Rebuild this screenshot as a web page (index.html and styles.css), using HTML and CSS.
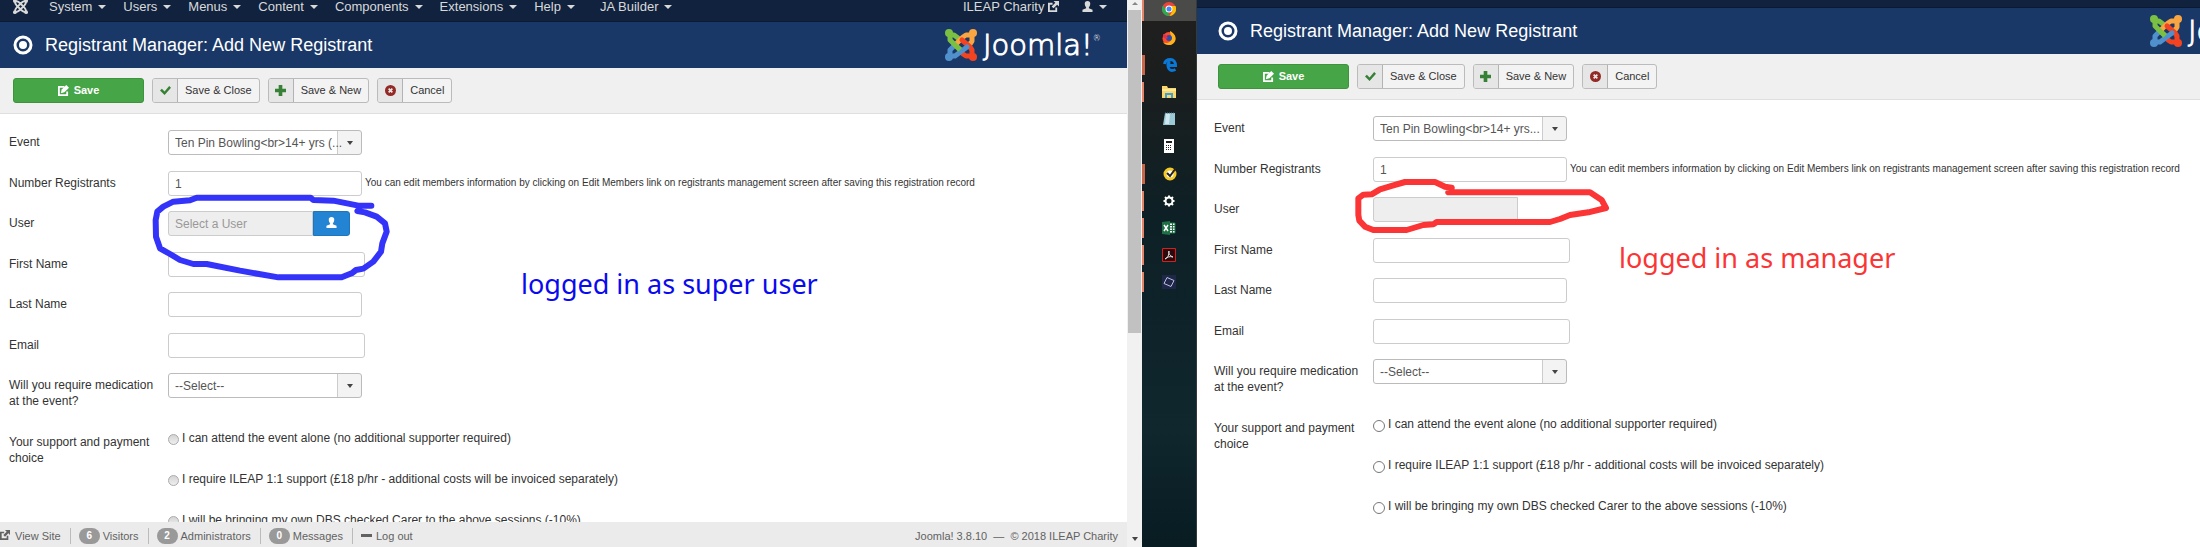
FILE: index.html
```
<!DOCTYPE html>
<html lang="en">
<head>
  <meta charset="UTF-8">
  <meta name="viewport" content="width=device-width, initial-scale=1.0">
  <title>Registrant Manager: Add New Registrant</title>
  <link rel="stylesheet" href="styles.css">
</head>
<body>
  <!-- shared icons -->
  <svg class="sprite" width="0" height="0" aria-hidden="true">
    <symbol id="joomla" viewBox="0 0 32 32">
      <g fill="none" stroke-width="5" stroke-linecap="round" stroke-linejoin="round">
        <path stroke="#7ac143" d="M5 6l4 0 4 3M5 6v5l3 3 9 8"/>
        <path stroke="#f9a541" d="M27 6v6l-2 3M27 6h-6l-3 2-7 7"/>
        <path stroke="#f44321" d="M27 27h-6l-3-2M27 27v-6l-2-3-8-7"/>
        <path stroke="#5091cd" d="M5 27v-6l3-3M5 27h5l4-3 8-6"/>
        <path stroke="#7ac143" d="M8 14l7 7" stroke-linecap="butt"/>
      </g>
      <circle cx="4" cy="4" r="4" fill="#7ac143"/>
      <circle cx="28" cy="4" r="4" fill="#f9a541"/>
      <circle cx="28" cy="28" r="4" fill="#f44321"/>
      <circle cx="4" cy="28" r="4" fill="#5091cd"/>
    </symbol>
    <symbol id="joomla-mono" viewBox="0 0 16 16">
      <g fill="none" stroke="currentColor" stroke-width="2">
        <path d="M2 2c3 0 4 1 5 2l5 5c1 1 2 3 2 5M14 2c-3 0-4 1-5 2L4 9c-1 1-2 3-2 5M2 2c0 3 1 4 2 5l5 5c1 1 3 2 5 2M14 2c0 3-1 4-2 5l-5 5c-1 1-3 2-5 2"/>
      </g>
      <g fill="currentColor">
        <circle cx="2" cy="2" r="2"/><circle cx="14" cy="2" r="2"/><circle cx="2" cy="14" r="2"/><circle cx="14" cy="14" r="2"/>
      </g>
    </symbol>
    <symbol id="target" viewBox="0 0 20 20">
      <circle cx="10" cy="10" r="8" fill="none" stroke="currentColor" stroke-width="3"/>
      <circle cx="10" cy="10" r="4" fill="currentColor"/>
    </symbol>
    <symbol id="edit" viewBox="0 0 12 12">
      <path fill="none" stroke="currentColor" stroke-width="2" d="M7 2H1v9h9V7"/>
      <path fill="currentColor" d="M3 9l1-4 5-5 3 3-5 5z"/>
    </symbol>
    <symbol id="external" viewBox="0 0 12 12">
      <path fill="none" stroke="currentColor" stroke-width="2" d="M5 3H1v8h8V7"/>
      <path fill="currentColor" d="M6 0h6v6l-2-2-4 4-2-2 4-4z"/>
    </symbol>
    <symbol id="check" viewBox="0 0 12 12">
      <path fill="currentColor" d="M0 6l2-2 3 3 5-6 2 2-7 8z"/>
    </symbol>
    <symbol id="plus" viewBox="0 0 12 12">
      <path fill="currentColor" d="M4 0h4v4h4v4H8v4H4V8H0V4h4z"/>
    </symbol>
    <symbol id="cancel" viewBox="0 0 12 12">
      <circle cx="6" cy="6" r="6" fill="currentColor"/>
      <path stroke="#e6e6e6" stroke-width="2" d="M4 4l4 4M8 4L4 8"/>
    </symbol>
    <symbol id="user" viewBox="0 0 12 12">
      <path fill="currentColor" d="M6 0c2 0 3 1 3 3S8 6 7.500 7v1l4 1.500V12H.5V9.500l4-1.500V7C4 6 3 5 3 3s1-3 3-3z"/>
    </symbol>
  </svg>

  <div class="desktop">
    <section class="window window-left">
      <div class="page">
        <nav class="navbar">
          <svg class="brand"><use href="#joomla-mono"/></svg>
          <a class="menu" href="#">System</a>
          <a class="menu" href="#">Users</a>
          <a class="menu" href="#">Menus</a>
          <a class="menu" href="#">Content</a>
          <a class="menu" href="#">Components</a>
          <a class="menu" href="#">Extensions</a>
          <a class="menu" href="#">Help</a>
          <a class="menu menu-extra" href="#">JA Builder</a>
          <a class="site" href="#">ILEAP Charity <svg class="icon"><use href="#external"/></svg></a>
          <a class="menu" href="#" aria-label="User menu"><svg class="icon"><use href="#user"/></svg></a>
        </nav>

        <header class="header">
          <svg class="title-icon"><use href="#target"/></svg>
          <h1>Registrant Manager: Add New Registrant</h1>
          <div class="logo">
            <svg class="logo-mark"><use href="#joomla"/></svg>
            <span class="logo-text">Joomla!<sup>®</sup></span>
          </div>
        </header>

        <div class="toolbar">
          <button class="btn btn-save" type="button"><svg class="icon"><use href="#edit"/></svg>Save</button>
          <button class="btn" type="button"><span class="btn-icon green"><svg class="icon"><use href="#check"/></svg></span><span class="btn-text">Save &amp; Close</span></button>
          <button class="btn" type="button"><span class="btn-icon green"><svg class="icon"><use href="#plus"/></svg></span><span class="btn-text">Save &amp; New</span></button>
          <button class="btn" type="button"><span class="btn-icon red"><svg class="icon"><use href="#cancel"/></svg></span><span class="btn-text">Cancel</span></button>
        </div>

        <form class="form">
          <div class="row">
            <label for="event1">Event</label>
            <span class="select"><select id="event1"><option>Ten Pin Bowling&lt;br&gt;14+ yrs (...</option></select></span>
          </div>
          <div class="row">
            <label for="number1">Number Registrants</label>
            <input class="text" id="number1" type="text" value="1">
            <small>You can edit members information by clicking on Edit Members link on registrants management screen after saving this registration record</small>
          </div>
          <div class="row">
            <label for="user1">User</label>
            <input class="text user" id="user1" type="text" placeholder="Select a User" readonly>
            <button class="btn-user" type="button" aria-label="Select a User"><svg class="icon"><use href="#user"/></svg></button>
          </div>
          <div class="row">
            <label for="first1">First Name</label>
            <input class="text wide" id="first1" type="text">
          </div>
          <div class="row">
            <label for="last1">Last Name</label>
            <input class="text" id="last1" type="text">
          </div>
          <div class="row">
            <label for="email1">Email</label>
            <input class="text wide" id="email1" type="text">
          </div>
          <div class="row">
            <label for="medication1">Will you require medication at the event?</label>
            <span class="select"><select id="medication1"><option>--Select--</option></select></span>
          </div>
          <div class="row" role="radiogroup" aria-labelledby="support1">
            <span class="label" id="support1">Your support and payment choice</span>
            <div class="radios">
              <label><input type="radio" name="support1">I can attend the event alone (no additional supporter required)</label>
              <label><input type="radio" name="support1">I require ILEAP 1:1 support (£18 p/hr - additional costs will be invoiced separately)</label>
              <label><input type="radio" name="support1">I will be bringing my own DBS checked Carer to the above sessions (-10%)</label>
            </div>
          </div>
        </form>

        <footer class="status">
          <a href="#"><svg class="icon"><use href="#external"/></svg>View Site</a>
          <span class="item"><span class="badge">6</span>Visitors</span>
          <span class="item"><span class="badge">2</span>Administrators</span>
          <span class="item"><span class="badge">0</span>Messages</span>
          <a class="item" href="#"><span class="dash"></span>Log out</a>
          <span class="version">Joomla! 3.8.10 &nbsp;—&nbsp; © 2018 ILEAP Charity</span>
        </footer>
      </div>
      <div class="scrollbar"><span class="arrow up"></span><span class="thumb"></span><span class="arrow down"></span></div>

      <svg class="pen pen-blue" viewBox="450 30 750 300">
        <path d="M1114 77H1075L1000 62L940 60L932 53H590L570 61L520 65L490 80L472 95L467 120L468 170L480 205L510 222L540 240L580 252H620L720 272L835 292H1025L1055 280L1068 270L1090 266L1120 245L1143 215L1147 190L1160 155L1155 130L1130 110L1095 97L1072 93"/>
      </svg>
      <p class="note note-blue">logged in as super user</p>
    </section>

    <aside class="taskbar">
      <ul>
        <li class="open current"><svg viewBox="0 0 14 14"><circle cx="7" cy="7" r="7" fill="#e8453c"/><path fill="#2da94f" d="M1 3.500l4.500 6L8 14A7 7 0 0 1 1 3.500z"/><path fill="#fdbd00" d="M7 4h6.500A7 7 0 0 1 7.500 14l3-5z"/><circle cx="7" cy="7" r="3.500" fill="#fff"/><circle cx="7" cy="7" r="2.500" fill="#4587f3"/></svg></li>
        <li><svg viewBox="0 0 14 14"><circle cx="7" cy="7.500" r="6.500" fill="#ff4b2b"/><path fill="#ffb31a" d="M8 0c4 2 6 5 5.500 8.500C13 12 10 14 7 14c-3 0-5-1-6-3 3 2 7 1 8-2 1-3-1-5-1-9z"/><circle cx="7" cy="7" r="3" fill="#2b4fa8"/><path fill="#e0304e" d="M1 3l3 1 2 3-2 1-3-2z"/></svg></li>
        <li class="open many"><svg viewBox="0 0 14 14"><path fill="none" stroke="#0a78d7" stroke-width="3" d="M1.500 6C2 3 4 1.500 7.500 1.500c3 0 5 2.500 5 6H5c0 3 2 5 4 5 1.500 0 2.500-.5 3.500-1M5 7c0-2 1-3 2.500-3"/></svg></li>
        <li class="open"><svg viewBox="0 0 14 14"><path fill="#fdd765" d="M0 1h5l1 2h8v10H0z"/><path fill="#ffe9a2" d="M0 4h14v2H0z"/><path fill="#3ba1dc" d="M3 8h8v5H9v-3H5v3H3z"/></svg></li>
        <li><svg viewBox="0 0 14 14"><path fill="#9cc9d6" d="M3 1h10v12H1z"/><path fill="#cfe7ee" d="M4 2h4l-1 10H3z"/><path stroke="#56727c" stroke-dasharray="1 1" d="M3 1h10"/></svg></li>
        <li><svg viewBox="0 0 14 14"><path fill="#fff" d="M2 0h10v14H2z"/><path fill="#222" d="M4 2h6v2H4z"/><path stroke="#222" stroke-dasharray="1 1" d="M4 6.500h6M4 8.500h6M4 10.500h6"/></svg></li>
        <li class="open many"><svg viewBox="0 0 14 14"><circle cx="7" cy="7" r="5" fill="#fff" stroke="#f5c926" stroke-width="3"/><path fill="none" stroke="#222" stroke-width="2" d="M4 6l3 3 6-8"/></svg></li>
        <li class="open"><svg viewBox="0 0 14 14"><circle cx="7" cy="7" r="3.500" fill="none" stroke="#fff" stroke-width="2"/><path stroke="#fff" stroke-width="2" d="M7 1.500v2M7 10.500v2M1.500 7h2M10.500 7h2M3 3l1.500 1.500M9.500 9.500L11 11M11 3L9.500 4.500M3 11l1.500-1.500"/></svg></li>
        <li class="open"><svg viewBox="0 0 14 14"><path fill="#fff" stroke="#1e7145" d="M7 2h6v10H7z"/><path stroke="#1e7145" d="M8 4.500h5M8 7h5M8 9.500h5M10.500 2v10"/><path fill="#1e7145" d="M0 1l8-1v14l-8-1z"/><path stroke="#fff" stroke-width="1.500" d="M2 4l4 6M6 4l-4 6"/></svg></li>
        <li class="open"><svg viewBox="0 0 14 14"><path fill="#2a0a0c" stroke="#d51f1f" d="M.5.500h13v13H.5z"/><path fill="none" stroke="#e8dede" d="M7 3c-1 2 1 5 4 6-3-1-6 0-8 2 3-1 4-4 4-8z"/></svg></li>
        <li class="open"><svg viewBox="0 0 14 14"><path fill="#20264a" d="M0 0h14v14H0z"/><path fill="none" stroke="#b7c4d8" d="M5 2.500l7 3-3 6-7-3z"/></svg></li>
      </ul>
    </aside>

    <section class="window window-right">
      <div class="page">
        <nav class="navbar">
          <svg class="brand"><use href="#joomla-mono"/></svg>
          <a class="menu" href="#">Content</a>
          <a class="menu" href="#">Components</a>
          <a class="menu" href="#">Help</a>
        </nav>

        <header class="header">
          <svg class="title-icon"><use href="#target"/></svg>
          <h1>Registrant Manager: Add New Registrant</h1>
          <div class="logo">
            <svg class="logo-mark"><use href="#joomla"/></svg>
            <span class="logo-text">Joomla!<sup>®</sup></span>
          </div>
        </header>

        <div class="toolbar">
          <button class="btn btn-save" type="button"><svg class="icon"><use href="#edit"/></svg>Save</button>
          <button class="btn" type="button"><span class="btn-icon green"><svg class="icon"><use href="#check"/></svg></span><span class="btn-text">Save &amp; Close</span></button>
          <button class="btn" type="button"><span class="btn-icon green"><svg class="icon"><use href="#plus"/></svg></span><span class="btn-text">Save &amp; New</span></button>
          <button class="btn" type="button"><span class="btn-icon red"><svg class="icon"><use href="#cancel"/></svg></span><span class="btn-text">Cancel</span></button>
        </div>

        <form class="form">
          <div class="row">
            <label for="event2">Event</label>
            <span class="select"><select id="event2"><option>Ten Pin Bowling&lt;br&gt;14+ yrs...</option></select></span>
          </div>
          <div class="row">
            <label for="number2">Number Registrants</label>
            <input class="text" id="number2" type="text" value="1">
            <small>You can edit members information by clicking on Edit Members link on registrants management screen after saving this registration record</small>
          </div>
          <div class="row">
            <label for="user2">User</label>
            <input class="text user" id="user2" type="text" readonly>
          </div>
          <div class="row">
            <label for="first2">First Name</label>
            <input class="text wide" id="first2" type="text">
          </div>
          <div class="row">
            <label for="last2">Last Name</label>
            <input class="text" id="last2" type="text">
          </div>
          <div class="row">
            <label for="email2">Email</label>
            <input class="text wide" id="email2" type="text">
          </div>
          <div class="row">
            <label for="medication2">Will you require medication at the event?</label>
            <span class="select"><select id="medication2"><option>--Select--</option></select></span>
          </div>
          <div class="row" role="radiogroup" aria-labelledby="support2">
            <span class="label" id="support2">Your support and payment choice</span>
            <div class="radios">
              <label><input type="radio" name="support2">I can attend the event alone (no additional supporter required)</label>
              <label><input type="radio" name="support2">I require ILEAP 1:1 support (£18 p/hr - additional costs will be invoiced separately)</label>
              <label><input type="radio" name="support2">I will be bringing my own DBS checked Carer to the above sessions (-10%)</label>
            </div>
          </div>
        </form>
      </div>

      <svg class="pen pen-red" viewBox="480 45 810 180">
        <path d="M785 84L775 97H1200L1235 120L1248 144L1195 157L1140 165L1110 177L1080 186H740L730 193L700 195L650 210H550L525 200L508 182L505 165V115L520 104L545 103L570 88L610 76L645 66H735L765 80L785 83"/>
      </svg>
      <p class="note note-red">logged in as manager</p>
    </section>
  </div>
</body>
</html>
```
FILE: styles.css
```
* {
  box-sizing: border-box;
}
body {
  margin: 0;
  font-family: "Liberation Sans", Arial, sans-serif;
  font-size: 12px;
  line-height: 16px;
  color: #333;
}
a {
  color: inherit;
  text-decoration: none;
}
input, select, button {
  margin: 0;
  font-family: inherit;
  font-size: 12px;
  color: #555;
}
.sprite {
  position: absolute;
}
.icon {
  width: 11px;
  height: 11px;
}

/* two browser windows with the taskbar between them */
.desktop {
  display: flex;
  height: 100vh;
  overflow: hidden;
}
.window {
  position: relative;
  display: flex;
  flex: none;
  overflow: hidden;
  background: #fff;
}
.window-left {
  width: calc(52% - 2px);
}
.window-right {
  width: calc(52% - 9px);
}
.page {
  display: flex;
  flex: 1;
  flex-direction: column;
  min-width: 0;
  margin-top: -8px;
}
.window-right .page {
  margin-top: -22px;
}
.window-right .navbar,
.window-right .header,
.window-right .toolbar,
.window-right .form {
  padding-left: 8px;
}

/* top menu */
.navbar {
  display: flex;
  flex: none;
  align-items: center;
  height: 30px;
  padding-right: 11px;
  background: #10223e;
  border-bottom: 1px solid #0b1a33;
  color: #d9d9d9;
  font-size: 13px;
}
.brand {
  width: 15px;
  height: 15px;
  margin: 0 13px;
}
.menu {
  display: flex;
  align-items: center;
  padding: 0 9px 0 8px;
}
.menu::after {
  content: "";
  margin-left: 6px;
  border: 4px solid transparent;
  border-top-color: #d9d9d9;
  border-bottom: 0;
}
.menu-extra {
  margin-left: 8px;
}
.site {
  margin-left: auto;
  padding-right: 15px;
}
.site .icon {
  vertical-align: -1px;
}

/* title bar */
.header {
  display: flex;
  flex: none;
  align-items: center;
  height: 46px;
  padding-right: 18px;
  background: #1a3867;
  color: #fff;
}
.title-icon {
  width: 20px;
  height: 20px;
  margin: 0 12px 0 13px;
}
h1 {
  margin: 0;
  font-size: 18px;
  font-weight: normal;
}
.logo {
  display: flex;
  align-items: center;
  gap: 6px;
  width: 164px;
  margin-left: auto;
}
.logo-mark {
  flex: none;
  width: 32px;
  height: 32px;
}
.logo-text {
  font-family: "DejaVu Sans", sans-serif;
  font-size: 29px;
  font-weight: 200;
  line-height: 32px;
  white-space: nowrap;
  -webkit-text-stroke: 1px #fff;
}
.logo-text sup {
  font-size: 8px;
  line-height: 8px;
  vertical-align: 14px;
  -webkit-text-stroke: 0;
}

/* buttons */
.toolbar {
  display: flex;
  flex: none;
  align-items: center;
  gap: 8px;
  height: 46px;
  background: #f0f0f0;
  border-bottom: 1px solid #dfdfdf;
}
.btn {
  display: flex;
  height: 25px;
  padding: 0;
  background: #f3f3f3;
  border: 1px solid #bbb;
  border-radius: 3px;
  color: #333;
  font-size: 11px;
  line-height: 23px;
  overflow: hidden;
}
.btn-save {
  align-items: center;
  justify-content: center;
  gap: 5px;
  width: 131px;
  margin-left: 13px;
  background: #46a546;
  border-color: #3d943d;
  color: #fff;
  font-weight: bold;
}
.btn-icon {
  display: flex;
  align-items: center;
  justify-content: center;
  width: 25px;
  height: 23px;
  background: #e6e6e6;
  border-right: 1px solid #b3b3b3;
}
.btn-text {
  padding: 0 7px;
}
.green {
  color: #378137;
}
.red {
  color: #942a25;
}

/* registrant form */
.form {
  flex: 1;
  min-height: 0;
  padding-top: 16px;
  overflow: hidden;
}
.row {
  display: flex;
  align-items: flex-start;
  margin-bottom: 16px;
}
.row:nth-child(even) {
  margin-bottom: 15px;
}
.row > label,
.row > .label {
  flex: none;
  width: 168px;
  padding: 4px 8px 5px 9px;
}
.text {
  width: 194px;
  height: 25px;
  padding: 0 6px;
  background: #fff;
  border: 1px solid #ccc;
  border-radius: 3px;
}
.wide {
  width: 197px;
}
.user {
  width: 145px;
  background: #eee;
  border-radius: 3px 0 0 3px;
}
.user::placeholder {
  color: #999;
}
.btn-user {
  width: 37px;
  height: 25px;
  padding: 0;
  background: #2384d3;
  border: 1px solid #1f76bd;
  border-radius: 0 3px 3px 0;
  color: #fff;
}
.row small {
  padding: 4px 0 0 3px;
  font-size: 10px;
  white-space: nowrap;
}
.select {
  position: relative;
  width: 194px;
  height: 25px;
}
.select select {
  width: 100%;
  height: 100%;
  padding: 0 0 0 6px;
  appearance: none;
  background: linear-gradient(to left, #f3f3f3 23px, #ccc 23px, #ccc 24px, #fff 24px);
  border: 1px solid #bbb;
  border-radius: 3px;
}
.select::after {
  content: "";
  position: absolute;
  top: 11px;
  right: 9px;
  border: 3px solid transparent;
  border-top: 4px solid #444;
  border-bottom: 0;
  pointer-events: none;
}
.radios {
  display: flex;
  flex-direction: column;
  gap: 25px;
}
.radios label {
  display: flex;
  align-items: flex-start;
  gap: 3px;
}
.radios input {
  width: 11px;
  height: 11px;
  margin-top: 4px;
  appearance: none;
  background: linear-gradient(#d4d4d4, #efefef);
  border: 1px solid #aaa;
  border-radius: 50%;
}
.window-right .radios input {
  width: 12px;
  height: 12px;
  background: #fff;
  border-color: #777;
}

/* status bar */
.status {
  display: flex;
  flex: none;
  align-items: center;
  height: 25px;
  padding: 2px 9px 0 0;
  background: #ebebeb;
  color: #626262;
  font-size: 11px;
}
.status .icon {
  width: 10px;
  height: 10px;
  margin-right: 5px;
}
.item {
  display: flex;
  align-items: center;
  margin-left: 9px;
  padding-left: 8px;
  border-left: 1px solid #bbb;
}
.badge {
  width: 21px;
  height: 16px;
  margin-right: 3px;
  background: #999;
  border-radius: 8px;
  color: #fff;
  font-size: 10px;
  font-weight: bold;
  text-align: center;
}
.dash {
  width: 11px;
  height: 3px;
  margin-right: 4px;
  background: #626262;
}
.version {
  margin-left: auto;
}
.scrollbar {
  display: flex;
  flex: none;
  flex-direction: column;
  align-items: center;
  width: 15px;
  background: #f1f1f1;
}
.arrow {
  border: 3px solid transparent;
}
.up {
  margin-bottom: 5px;
  border-top: 0;
  border-bottom: 3px solid #888;
  margin-top: 2px;
}
.down {
  margin: auto 0 6px;
  border-top: 4px solid #444;
  border-bottom: 0;
}
.thumb {
  width: 13px;
  height: 59%;
  background: #c1c1c1;
}

/* taskbar */
.taskbar {
  flex: none;
  width: 55px;
  background: linear-gradient(#20201e, #1b1e1e 80px, #0d2026 220px, #0f272d 430px, #081c22);
  border-right: 1px solid #333b3c;
}
.taskbar ul {
  display: flex;
  flex-direction: column;
  justify-content: space-between;
  height: 296px;
  margin: -4px 0 0;
  padding: 0;
  list-style: none;
}
.taskbar li {
  display: flex;
  align-items: center;
  justify-content: center;
  height: 20px;
  border-left: 2px solid transparent;
  border-right: 2px solid transparent;
}
.taskbar li svg {
  width: 14px;
  height: 14px;
}
.taskbar .open {
  border-left-color: #e5866b;
}
.taskbar .many {
  border-left: 3px solid #c8664a;
}
.taskbar .current {
  height: 25px;
  background: #4a4b49;
}

/* pen marks drawn over the windows */
.pen {
  position: absolute;
  fill: none;
  stroke-width: 18;
  stroke-linecap: round;
  stroke-linejoin: round;
}
.pen-blue {
  top: 190px;
  left: 150px;
  width: 250px;
  height: 100px;
  stroke: #3333fa;
}
.pen-red {
  top: 175px;
  left: 153px;
  width: 270px;
  height: 60px;
  stroke: #fb3535;
}
.note {
  position: absolute;
  margin: 0;
  font-family: "Noto Sans", sans-serif;
  font-size: 27px;
  line-height: 32px;
  white-space: nowrap;
}
.note-blue {
  top: 268px;
  left: 521px;
  color: #0a0af0;
}
.note-red {
  top: 242px;
  left: 422px;
  color: #fb3535;
}
```
